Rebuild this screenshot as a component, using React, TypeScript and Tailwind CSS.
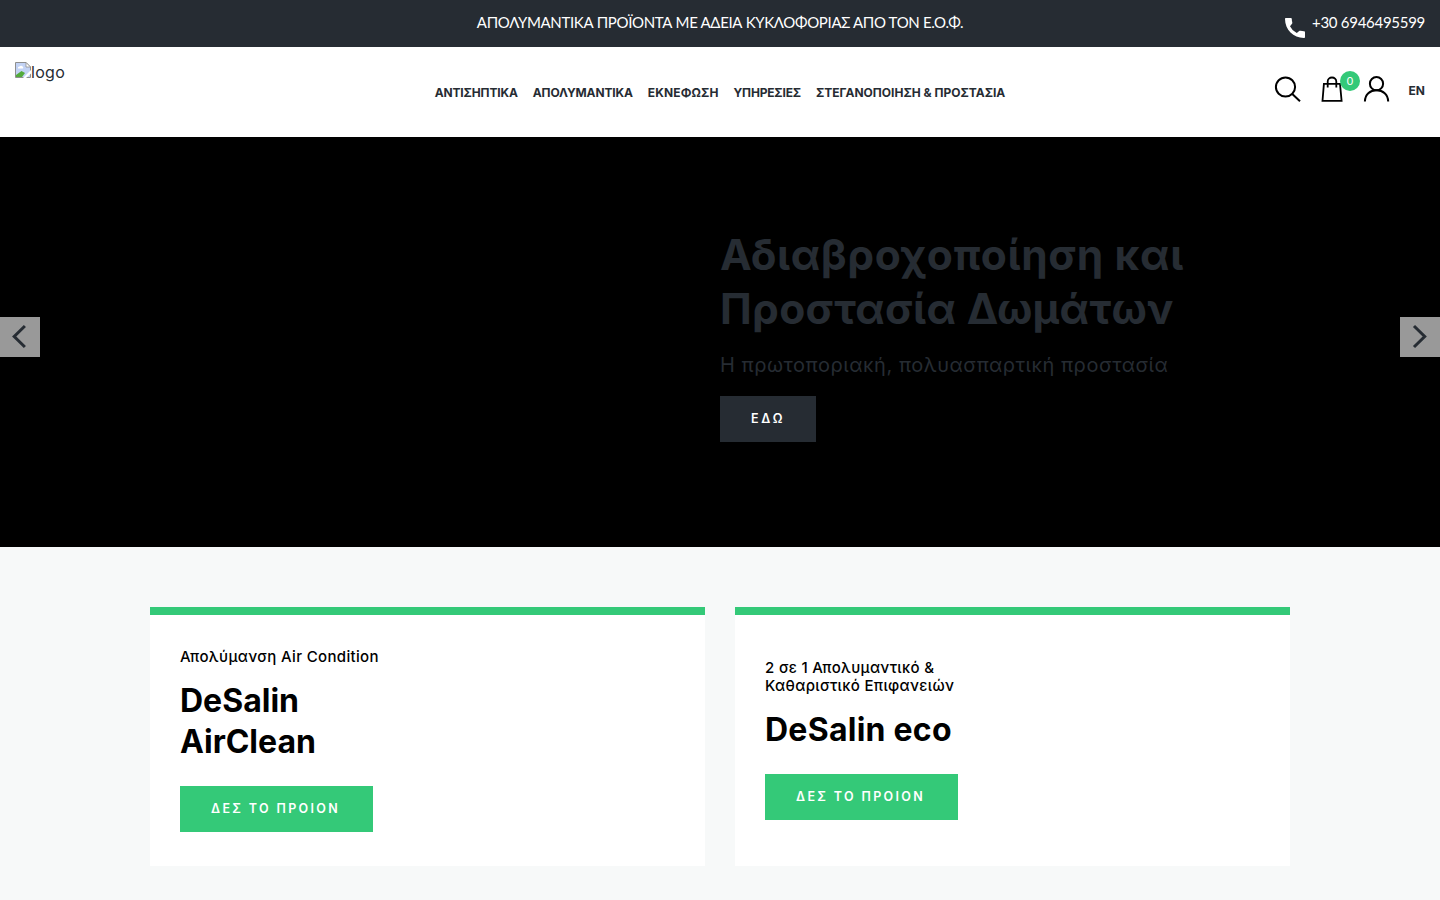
function PhoneIcon() {
  return (
    <svg width="20" height="20" viewBox="0 0 20 20" className="mt-[9px] shrink-0" fill="#fff">
      <path d="M1 0H5.600C6.400 0 6.700.4 6.800 1c0 1.300.2 2.400.5 3.500.1.500 0 .9-.3 1.300L5 8.200a14 14 0 0 0 6.800 6.800l2.400-2c.4-.3.8-.4 1.300-.3 1.100.3 2.200.5 3.400.5.700.1 1.100.4 1.100 1.200v4.600c0 .6-.5 1-1.100 1C8.500 20 0 11.500 0 1 0 .4.400 0 1 0Z" />
    </svg>
  );
}

function SearchIcon() {
  return (
    <svg width="27" height="27" viewBox="0 0 27 27" fill="none" stroke="#000" strokeWidth="2">
      <circle cx="11.500" cy="11" r="9.600" />
      <path d="M18.300 18 26 25.300" />
    </svg>
  );
}

function BagIcon() {
  return (
    <svg width="22" height="27" viewBox="0 0 22 27" fill="none" stroke="#000" strokeWidth="1.800">
      <path d="M2.900 7.900H19L20.600 24.900H1.500Z" />
      <path d="M6.700 11.500V5.600a4.300 4.100 0 0 1 8.600 0V11.500" />
    </svg>
  );
}

function UserIcon() {
  return (
    <svg width="27" height="27" viewBox="0 0 27 27" fill="none" stroke="#000" strokeWidth="2">
      <circle cx="13.500" cy="7.700" r="6.600" />
      <path d="M1.900 25.500C2 18.300 7 14.300 13.500 14.300S25 18.300 25.200 25.500" />
    </svg>
  );
}

function BrokenImage() {
  return (
    <svg width="16" height="16" viewBox="0 0 16 16" className="shrink-0">
      <path d="M.5 .5H11L15.500 5V15.500H.5Z" fill="#c3d3f5" stroke="#8f8f8f" />
      <path d="M1 15V13L6.500 9 10 11 7 15Z" fill="#53ab3c" />
      <path d="M3 6.500a1.500 1.500 0 0 1 1.500-2 2 2 0 0 1 3.500.5 1.200 1.200 0 0 1 0 1.500Z" fill="#fff" />
      <path d="M11 .5V5H15.500Z" fill="#fff" stroke="#8f8f8f" strokeWidth=".8" />
      <path d="M16 8 8 16H11L16 11.500Z" fill="#fff" />
    </svg>
  );
}

function Arrow({ right = false }: { right?: boolean }) {
  return (
    <button className="flex h-10 w-10 items-center justify-center bg-[#999999]">
      <svg width="40" height="40" viewBox="0 0 40 40" fill="none" stroke="#262c33" strokeWidth="3">
        <path d={right ? 'M14 9 24.700 19.500 14 30' : 'M24.900 9 14.200 19.500 24.900 30'} />
      </svg>
    </button>
  );
}

const card = 'flex h-[259px] w-[555px] flex-col justify-center border-t-8 border-[#34c978] bg-white px-[30px] text-black';
const label = 'text-[15px] font-medium leading-[18px]';
const title = 'mt-[14px] text-[32px] font-bold leading-[41px] text-black';
const action =
  'mt-6 flex h-[46px] w-[193px] items-center bg-[#34c978] pl-[31px] text-[12.500px] font-semibold tracking-[2.350px] whitespace-nowrap text-white';

export default function App() {
  return (
    <div className="flex h-[900px] w-[1440px] flex-col overflow-hidden bg-[#f7f9f9] font-['Inter',sans-serif] text-[#262c33]">
      <div className="grid h-[47px] shrink-0 grid-cols-[1fr_auto_1fr] bg-[#262c33] px-[15px] font-['Lato'] text-[15px] leading-[45px] text-white">
        <span />
        <span className="tracking-[-0.340px]">ΑΠΟΛΥΜΑΝΤΙΚΑ ΠΡΟΪΟΝΤΑ ΜΕ ΑΔΕΙΑ ΚΥΚΛΟΦΟΡΙΑΣ ΑΠΟ ΤΟΝ Ε.Ο.Φ.</span>
        <div className="flex items-start justify-end gap-[7px]">
          <div className="flex pt-[9px]"><PhoneIcon /></div>
          <span className="tracking-[-0.280px]">+30 6946495599</span>
        </div>
      </div>

      <header className="grid h-[90px] shrink-0 grid-cols-[1fr_auto_1fr] bg-white px-[15px]">
        <div className="flex items-start pt-[15px]">
          <BrokenImage />
          <span className="text-[16px] leading-[21px] tracking-[0.300px]">logo</span>
        </div>
        <nav className="flex items-center gap-[15px] pt-[2px] text-[12px] font-bold whitespace-nowrap">
          <a className="tracking-[-0.150px]">ΑΝΤΙΣΗΠΤΙΚΑ</a>
          <a className="tracking-[-0.140px]">ΑΠΟΛΥΜΑΝΤΙΚΑ</a>
          <a className="tracking-[0.120px]">ΕΚΝΕΦΩΣΗ</a>
          <a className="tracking-[-0.180px]">ΥΠΗΡΕΣΙΕΣ</a>
          <a>ΣΤΕΓΑΝΟΠΟΙΗΣΗ &amp; ΠΡΟΣΤΑΣΙΑ</a>
        </nav>
        <div className="flex items-start justify-end pt-[29px]">
          <SearchIcon />
          <div className="relative ml-[20px]">
            <BagIcon />
            <span className="absolute -top-[5px] left-[19px] flex h-5 w-5 items-center justify-center rounded-full bg-[#34c978] pb-[2px] font-['Lato'] text-[11px] leading-none text-white">0</span>
          </div>
          <div className="ml-[20px]"><UserIcon /></div>
          <span className="ml-[18.600px] text-[12px] font-bold leading-[29px]">EN</span>
        </div>
      </header>

      <section className="flex h-[410px] shrink-0 justify-between bg-black">
        <div className="flex w-[720px] items-center pb-[10px]"><Arrow /></div>
        <div className="w-[600px] pt-[91px]">
          <h1 className="text-[42.500px] font-bold leading-[54px] whitespace-nowrap">
            <span className="block tracking-[0.600px]">Αδιαβροχοποίηση και</span>
            <span className="block tracking-[0.310px]">Προστασία Δωμάτων</span>
          </h1>
          <p className="mt-[16px] text-[20px] leading-[26px] tracking-[0.520px] whitespace-nowrap">Η πρωτοποριακή, πολυασπαρτική προστασία</p>
          <a className="mt-[18px] flex h-[46px] w-[96px] items-center bg-[#262c33] pl-[31px] text-[12.500px] font-semibold tracking-[2.600px] text-white">ΕΔΩ</a>
        </div>
        <div className="flex flex-1 items-center justify-end pb-[10px]"><Arrow right /></div>
      </section>

      <main className="flex gap-[30px] px-[150px] pt-[60px]">
        <article className={`${card} pb-px`}>
          <p className={`${label} tracking-[0.350px]`}>Απολύμανση Air Condition</p>
          <h2 className={title}>
            <span className="block">DeSalin</span>
            <span className="block">AirClean</span>
          </h2>
          <a className={action}>ΔΕΣ ΤΟ ΠΡΟΙΟΝ</a>
        </article>
        <article className={`${card} pb-[2px]`}>
          <p className={label}>
            <span className="block tracking-[0.320px]">2 σε 1 Απολυμαντικό &amp;</span>
            <span className="block tracking-[0.340px]">Καθαριστικό Επιφανειών</span>
          </p>
          <h2 className={`${title} tracking-[0.250px]`}>DeSalin eco</h2>
          <a className={action}>ΔΕΣ ΤΟ ΠΡΟΙΟΝ</a>
        </article>
      </main>
    </div>
  );
}
